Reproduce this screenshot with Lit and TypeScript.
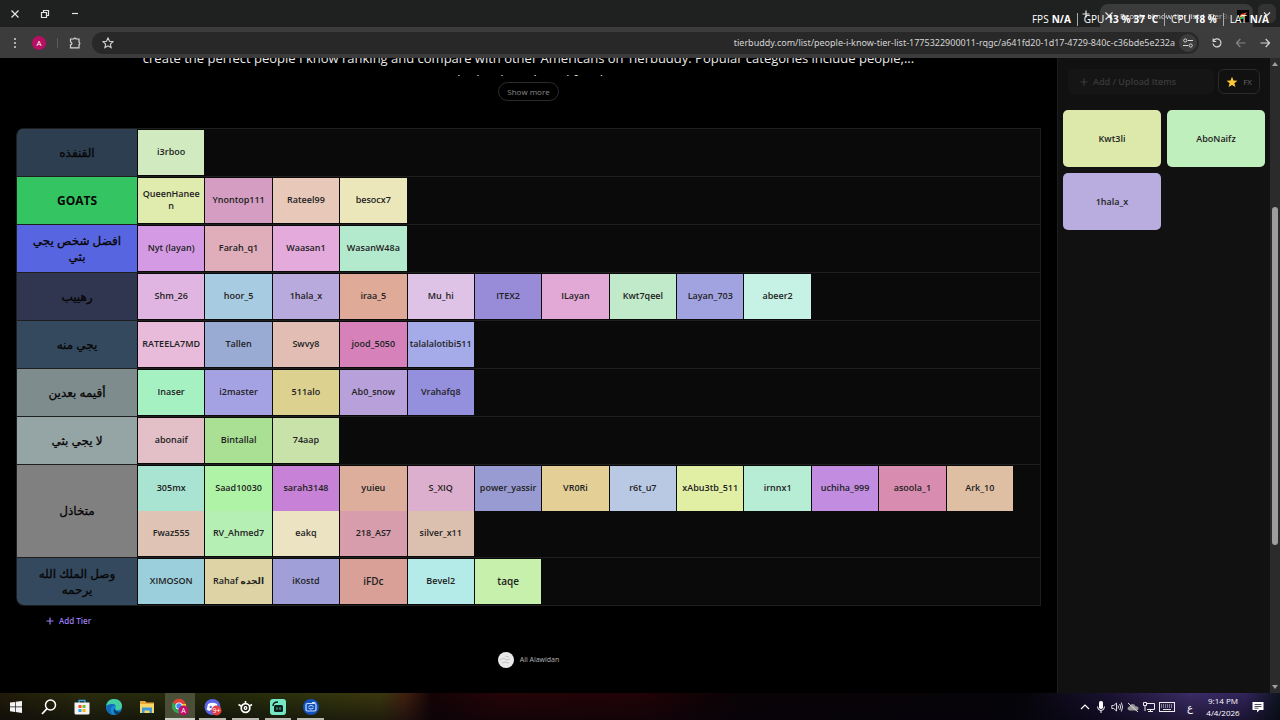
import { LitElement, html, css, svg } from "lit";
import { customElement } from "lit/decorators.js";

interface Tile { name: string; color: string; variant: string }
interface Tier { label: string; color: string; latin?: boolean; tiles: Tile[] }

const t = (name: string, color: string, variant = ""): Tile => ({ name, color, variant });

const tiers: Tier[] = [
  { label: "القنفذه", color: "#2c3e50", tiles: [t("i3rboo", "#d2eac0")] },
  { label: "GOATS", latin: true, color: "#34c461", tiles: [t("QueenHaneen", "#e0ebae"), t("Ynontop111", "#d59dc1"), t("Rateel99", "#e7c8b9"), t("besocx7", "#ece7bb")] },
  { label: "افضل شخص يجي بثي", color: "#5865e0", tiles: [t("Nyt (layan)", "#d49ae4"), t("Farah_q1", "#e0adba"), t("Waasan1", "#e4aadb"), t("WasanW48a", "#b3e9cd")] },
  { label: "رهييب", color: "#303650", tiles: [t("Shm_26", "#e1b5e1"), t("hoor_5", "#a7cbe1"), t("1hala_x", "#b8aadd"), t("iraa_5", "#dfaa98"), t("Mu_hi", "#dfc3e7"), t("ITEX2", "#988cd9"), t("ILayan", "#e3a9d6"), t("Kwt7qeel", "#c1eaca"), t("Layan_703", "#a1a2e0"), t("abeer2", "#c5f2e4")] },
  { label: "يجي منه", color: "#34495e", tiles: [t("RATEELA7MD", "#e7bbd9"), t("Tallen", "#99abd3"), t("Swvy8", "#e1bdb3"), t("jood_5050", "#d681ba"), t("talalalotibi511", "#a5aae8", "snug")] },
  { label: "أقيمه بعدين", color: "#7f8c8d", tiles: [t("Inaser", "#a6f1c2"), t("i2master", "#a5a2e4"), t("511alo", "#ddd18f"), t("Ab0_snow", "#b8a0db"), t("Vrahafq8", "#9490de")] },
  { label: "لا يجي بثي", color: "#95a5a6", tiles: [t("abonaif", "#e3bfc7"), t("Bintallal", "#a9e093"), t("74aap", "#c9e2aa")] },
  { label: "متخاذل", color: "#808080", tiles: [t("305mx", "#a9e3d1"), t("Saad10030", "#aff3a6"), t("sarah3148", "#c782d7"), t("yuieu", "#dcae9b"), t("S_XIQ", "#dcafce"), t("power_yassir", "#979bd1"), t("VR0Ri", "#e4cf97"), t("r6t_u7", "#b9c9e4"), t("xAbu3tb_511", "#e1efa5"), t("irnnx1", "#b8edd5"), t("uchiha_999", "#c28de0"), t("asoola_1", "#d88cb0"), t("Ark_10", "#dfbfa3"), t("Fwaz555", "#dfc3b5"), t("RV_Ahmed7", "#b6efb4"), t("eakq", "#ebe3c2"), t("218_AS7", "#d89dac"), t("silver_x11", "#dcc0af")] },
  { label: "وصل الملك الله يرحمه", color: "#34495e", tiles: [t("XIMOSON", "#9bcfdb"), t("Rahaf الجده", "#ddd3a4"), t("iKostd", "#a09fd8"), t("iFDc", "#d8a097", "large"), t("Bevel2", "#b4ebe8"), t("taqe", "#c6f0ab", "large")] },
];

const pool: Tile[] = [t("Kwt3li", "#dce9aa"), t("AboNaifz", "#c0efbe"), t("1hala_x", "#b9acde")];

const line = (d: string) => svg`<path d=${d} fill="none" stroke="currentColor" stroke-width="1.2"/>`;

const icons = {
  close: svg`<svg class="i10" viewBox="0 0 10 10">${line("M1.5 1.5l7 7M8.500 1.500l-7 7")}</svg>`,
  restore: svg`<svg class="i10" viewBox="0 0 10 10">${line("M1.500 3.500h5v5h-5zM3.500 3V1.500h5v5H7")}</svg>`,
  minimize: svg`<svg class="i10" viewBox="0 0 10 10">${line("M2 4.500h6")}</svg>`,
  plus: svg`<svg class="i10" viewBox="0 0 10 10">${line("M5 1.500v7M1.500 5h7")}</svg>`,
  chevron: svg`<svg class="i10" viewBox="0 0 10 10">${line("M2 3.500l3 3 3-3")}</svg>`,
  up: svg`<svg class="i10" viewBox="0 0 10 10">${line("M1 7l4-4 4 4")}</svg>`,
  dots: svg`<svg class="i12" viewBox="0 0 12 12" fill="#d5d5d5"><circle cx="6" cy="2" r="1"/><circle cx="6" cy="6" r="1"/><circle cx="6" cy="10" r="1"/></svg>`,
  puzzle: svg`<svg class="i12" viewBox="0 0 12 12">${line("M1.500 2h3.300a1.300 1.300 0 0 1 2.400 0H10v3.200a1.300 1.300 0 0 1 0 2.400V10.800H1.500V7.800a1.400 1.400 0 0 0 0-2.800z")}</svg>`,
  star: svg`<svg class="i12" viewBox="0 0 12 12"><path d="M6 1l1.500 3.300 3.500.4-2.600 2.400.7 3.500L6 8.800l-3.100 1.800.7-3.500L1 4.700l3.500-.4z" fill="none" stroke="currentColor" stroke-width="1.100"/></svg>`,
  tune: svg`<svg class="i12" viewBox="0 0 12 12">${line("M5.800 3.500H11M1 8.500h5.200")}<circle cx="3.300" cy="3.500" r="1.600" fill="none" stroke="currentColor"/><circle cx="8.700" cy="8.500" r="1.600" fill="none" stroke="currentColor"/></svg>`,
  reload: svg`<svg class="i12" viewBox="0 0 12 12">${line("M2.300 4.200A4 4 0 1 1 2 6.500M2.200 1.500v3h3")}</svg>`,
  back: svg`<svg class="i12" viewBox="0 0 12 12">${line("M10.500 6h-9M5.300 2L1.500 6l3.800 4")}</svg>`,
  forward: svg`<svg class="i12" viewBox="0 0 12 12">${line("M1.500 6h9M6.700 2l3.800 4-3.800 4")}</svg>`,
  goldStar: svg`<svg class="i12" viewBox="0 0 12 12"><path d="M6 .8l1.500 3.600 3.900.3-3 2.500 1 3.900L6 9l-3.400 2.100 1-3.900-3-2.500 3.900-.3z" fill="#fdc93a"/></svg>`,
  favicon: svg`<svg class="i12" viewBox="0 0 12 12"><rect width="12" height="12" fill="#050505"/><path d="M4 4l6-1.500L8.500 4.500 3 5.500z" fill="#f0473c"/><path d="M3 5.500l5.500-1-1 1.800L3 7.500z" fill="#f5b82e"/><path d="M3 7.500l4-1L5.500 9H3z" fill="#2fbd5b"/></svg>`,
};

const apps = [
  { name: "Start", icon: svg`<svg class="i18" viewBox="0 0 18 18" fill="#f4f4f4"><path d="M3 4.600l5-.7v4.700H3zM8.700 3.800L15 3v5.600H8.700zM3 9.300h5V14l-5-.7zM8.700 9.300H15V15l-6.300-.9z"/></svg>` },
  { name: "Search", icon: svg`<svg class="i18" viewBox="0 0 18 18"><circle cx="10.500" cy="7" r="5" fill="none" stroke="#fff" stroke-width="1.500"/><path d="M7 10.700L2 16" stroke="#fff" stroke-width="1.700"/></svg>` },
  { name: "Store", icon: svg`<svg class="i18" viewBox="0 0 18 18"><path d="M6 5V2.500h6V5" fill="none" stroke="#38a8e8" stroke-width="1.300"/><path d="M1.500 4.500h15V15q0 1.500-1.500 1.500H3Q1.500 16.500 1.500 15z" fill="#f3f3f3"/><path d="M5.500 7h3v3h-3z" fill="#f05123"/><path d="M9.500 7h3v3h-3z" fill="#7eba2d"/><path d="M5.500 11h3v3h-3z" fill="#2fa4e7"/><path d="M9.500 11h3v3h-3z" fill="#fbb70b"/></svg>` },
  { name: "Edge", icon: svg`<svg class="i18" viewBox="0 0 18 18"><circle cx="9" cy="9" r="8" fill="#168cd5"/><path d="M1.200 8C2 3.500 5 1 9 1c5 0 8 3.300 8 7 0 2.700-2 4-4.500 4-2 0-2.700-1-2-2 1-2-.2-4-3-4C4.500 6 2.200 7 1.200 8z" fill="#45cfa0"/><path d="M7.500 6C4.500 6 2 7 1.200 8.300 1 13 4.500 17 9 17c-3-1.500-4-5-2.700-7.500C7 8 8.500 7.500 10.300 8 10 6.700 9 6 7.500 6z" fill="#1469b8"/><path d="M9.500 10c0 3 3 4.500 6.500 3-1 1.500-2.500 3-5 3.500-2.500-1.500-3-4.500-1.500-6.500z" fill="#0c3c6c"/></svg>` },
  { name: "Files", icon: svg`<svg class="i18" viewBox="0 0 18 18"><path d="M2 3h5l1.500 1.500H16V15H2z" fill="#e5a93a"/><path d="M2 6h14v9H2z" fill="#fbd568"/><path d="M4 9.500h10V15h-2.500v-2.500h-5V15H4z" fill="#3c9bdc"/></svg>` },
  { name: "Chrome", state: "active", icon: svg`<svg class="i18" viewBox="0 0 18 18"><circle cx="8" cy="8" r="7.200" fill="#e44333"/><path d="M1.800 4.500A7.200 7.200 0 0 0 8 15.200l3.300-5.500L8 8z" fill="#28a555"/><path d="M15 6A7.200 7.200 0 0 1 8 15.200L11 9V6z" fill="#fbc52c"/><circle cx="8" cy="8" r="3.600" fill="#fff"/><circle cx="8" cy="8" r="2.700" fill="#4387ee"/><circle cx="12.500" cy="12.500" r="5" fill="#c2106a"/><text x="12.500" y="15" text-anchor="middle" font-size="7" fill="#fff">A</text></svg>` },
  { name: "Discord", state: "open", icon: svg`<svg class="i18" viewBox="0 0 18 18"><circle cx="8.500" cy="9" r="8" fill="#5966e8"/><path d="M4 6q4.500-2.500 9 0l1.300 5.500q-1.500 1.700-3 1.500l-.8-1.200H6.500L5.700 13q-1.800-.2-3-1.500z" fill="#fff"/><circle cx="6.700" cy="9" r="1.200" fill="#5966e8"/><circle cx="12.500" cy="12.500" r="5" fill="#e13d43"/><text x="12.500" y="15" text-anchor="middle" font-size="7" fill="#fff">9+</text></svg>` },
  { name: "SteelSeries", state: "open", icon: svg`<svg class="i18" viewBox="0 0 18 18" fill="none" stroke="#fff"><circle cx="9.500" cy="10" r="4.300" stroke-width="1.700"/><circle cx="9.500" cy="10" r="1.300" stroke-width="1.300"/><path d="M9.500 3v2.500M2.500 6.500l3.500 2M16 6.500l-2.500 1.500" stroke-width="1.500"/></svg>` },
  { name: "Streamlabs", state: "open", icon: svg`<svg class="i18" viewBox="0 0 18 18"><rect x="1" y="1" width="16" height="16" rx="3" fill="#74e8c5"/><path d="M4 8q0-4 5-4" fill="none" stroke="#0a211b" stroke-width="1.500"/><rect x="5" y="7" width="9" height="7" rx="1.500" fill="#0a211b"/><path d="M8 9.500v2M11 9.500v2" stroke="#74e8c5"/></svg>` },
  { name: "Camera", state: "open", icon: svg`<svg class="i18" viewBox="0 0 18 18"><circle cx="9" cy="9" r="8" fill="#1251bb"/><rect x="4" y="5.500" width="10" height="7.500" rx="1.500" fill="none" stroke="#c7ddff" stroke-width="1.200"/><path d="M6.500 8.500q2.500-2.200 5 0M11.500 10q-2.500 2.200-5 0M10 4.500h3.500" fill="none" stroke="#c7ddff"/></svg>` },
];

const tray = [
  { name: "Show hidden icons", icon: icons.up },
  { name: "Microphone", icon: svg`<svg class="i12" viewBox="0 0 12 12"><rect x="4" y="0" width="4" height="8" rx="1.800" fill="#fff"/><path d="M2.500 5.500q0 4 3.500 4t3.500-4M6 9.500V12" fill="none" stroke="#fff"/></svg>` },
  { name: "Volume", icon: svg`<svg class="i12" viewBox="0 0 12 12" fill="none" stroke="#eee"><path d="M.8 4.500h2L5.500 2v8L2.800 7.500h-2zM7 4.500q1 1.500 0 3M8.700 3q2 3 0 6M10.300 1.500q2.600 4.500 0 9" stroke-width=".9"/></svg>` },
  { name: "Cloud offline", icon: svg`<svg class="i12" viewBox="0 0 12 12"><path d="M2.500 9.500q-2-.5-2-2t2-2q.5-2.500 3-2.500 2 0 3 2.200 3 0 3 2.300 0 2-2 2z" fill="#999"/><path d="M1 2l10 9" stroke="#ddd"/></svg>` },
  { name: "Network", icon: svg`<svg class="i12" viewBox="0 0 12 12" fill="none" stroke="#eee"><path d="M4 2.500h7.500v6H4M7.500 8.500v2M5 10.500h5M.5 1.500h3v3h-3zM2 4.500v5.500"/></svg>` },
];

@customElement("app-root")
export class AppRoot extends LitElement {
  static styles = css`
    :host { display: flex; flex-direction: column; height: 100vh; overflow: hidden; background: #000; color: #ddd;
      font-family: "Open Sans", "Noto Sans", "DejaVu Sans", sans-serif; font-size: 9px; line-height: 12px; }
    * { box-sizing: border-box; }
    button, input { font: inherit; color: inherit; background: none; border: 0; padding: 0; margin: 0; }
    button { display: flex; align-items: center; justify-content: center; white-space: nowrap; }
    svg { display: block; flex: none; }
    .i10 { width: 10px; height: 10px; }
    .i12 { width: 12px; height: 12px; }
    .i18 { width: 18px; height: 18px; }

    .titlebar { position: relative; display: flex; align-items: center; height: 27px; flex: none; background: #1f2120; color: #e4e4e4; }
    .titlebar button { width: 30px; height: 27px; }
    .spacer { flex: 1; }
    .titlebar .new { width: 28px; }
    .tab { display: flex; align-items: center; gap: 6px; width: 153px; height: 23px; padding: 0 4px; align-self: flex-end; background: #3b3b3b; border-radius: 8px 8px 0 0; }
    .tab button { width: 10px; height: 20px; }
    .tab span { flex: 1; overflow: hidden; white-space: nowrap; font-size: 8px; mask-image: linear-gradient(90deg, #000 85%, transparent); }
    .titlebar .search { width: 18px; height: 19px; margin: 0 4px 0 5px; background: #333; border-radius: 6px; }
    .stats { position: absolute; right: 11px; top: 11px; display: flex; align-items: center; gap: 6px; color: #fff; font-size: 10px; line-height: 16px; white-space: nowrap; }
    .stats span { display: flex; gap: 3px; }
    .stats b { font-weight: 700; }
    .stats i { width: 1px; height: 13px; background: #aaa; }

    .toolbar { display: flex; align-items: center; height: 31px; flex: none; padding: 0 3px; background: #3c3c3c; color: #d5d5d5; }
    .toolbar button { width: 24px; height: 24px; }
    .toolbar .wide { width: 34px; }
    .toolbar .off { color: #858585; }
    .avatar { width: 14px; height: 14px; border-radius: 50%; background: #b90f62; color: #fff; font-size: 8px; line-height: 14px; text-align: center; }
    .sep { width: 1px; height: 10px; background: #5b5b5b; margin-left: 6px; }
    .omnibox { display: flex; align-items: center; flex: 1; height: 22px; padding: 0 2px 0 4px; border-radius: 11px; background: #282828; margin-right: 6px; }
    .omnibox input { flex: 1; min-width: 0; text-align: right; font-family: "Noto Sans", sans-serif; font-size: 9px; height: 20px; outline: 0; }
    .omnibox .tune { width: 18px; height: 18px; border-radius: 50%; background: #3c3c3c; margin-left: 4px; }

    .page { display: flex; flex: 1; min-height: 0; overflow: hidden; }
    main { flex: 1; min-width: 0; padding: 0 16px; display: flex; flex-direction: column; align-items: center; }
    .desc { flex: none; height: 29px; margin: -11px 0 0; overflow: hidden; font-size: 13px; line-height: 22px; color: #e8e8e8; text-align: center; }
    .desc span { display: block; }
    .more { flex: none; height: 19px; margin-top: 6px; padding: 0 8px; border: 1px solid #2b2b2b; border-radius: 10px; color: #8c8c8c; font-size: 8px; }
    .board { flex: none; width: 100%; margin-top: 27px; border: 1px solid #1e1e1e; border-top: 0; border-radius: 8px 0 0 8px; background: #0a0a0a; overflow: hidden; }
    .tier { display: grid; grid-template-columns: 120px 1fr; border-top: 1px solid #1e1e1e; }
    .label { display: flex; align-items: center; justify-content: center; padding: 0 12px; color: #060606; font-size: 12px; line-height: 16px; -webkit-text-stroke: 0.3px #060606; text-align: center; }
    .label.latin { font-weight: 700; -webkit-text-stroke: 0; }
    .tiles { display: grid; grid-template-columns: repeat(13, 1fr); column-gap: 1px; margin: 1px 27px 1px 1px; }
    .tile { display: flex; align-items: center; justify-content: center; min-width: 0; height: 45px; padding: 0 4px 2px; color: #222; font-size: 9px; font-weight: 600; line-height: 12px; text-align: center; }
    .tile span { min-width: 0; max-width: 100%; overflow-wrap: anywhere; }
    .tile.large { font-size: 10px; }
    .tile.snug { padding: 0 0 2px; white-space: nowrap; }
    .addtier { flex: none; align-self: flex-start; gap: 4px; height: 16px; margin: 7px 0 0 29px; color: #9b7df0; font-weight: 600; font-size: 8px; }
    .author { display: flex; align-items: center; gap: 6px; margin-top: 23px; color: #b5b5b5; font-size: 7px; text-decoration: none; }
    .face { width: 16px; height: 16px; }

    aside { width: 213px; flex: none; padding: 11px 5px 0 5px; background: #111; border-left: 1px solid #1d1d1d; }
    .actions { display: flex; gap: 4px; padding: 0 5px; height: 25px; }
    .upload { flex: 1; gap: 4px; justify-content: flex-start; padding-left: 11px; background: #151515; border-radius: 5px; font-weight: 600; }
    .upload:disabled { color: #3a3a3a; }
    .fx { width: 42px; gap: 5px; border: 1px solid #2a2a2a; border-radius: 6px; color: #666; font-size: 8px; }
    .pool { display: grid; grid-template-columns: 1fr 1fr; gap: 6px; margin-top: 16px; }
    .pool .tile { height: 57px; padding-bottom: 0; border-radius: 5px; }
    .scroll { display: flex; flex-direction: column; align-items: center; width: 10px; flex: none; background: #2b2b2b; padding: 4px 0; color: #a0a0a0; }
    .thumb { width: 6px; height: 338px; border-radius: 3px; background: #9d9d9d; margin: 141px 0 auto; }
    .arrow { width: 6px; height: 4px; }

    .taskbar { display: flex; height: 27px; flex: none; align-items: center; color: #fff; font-size: 8px;
      background: linear-gradient(180deg, transparent, rgba(5, 4, 12, 0.5)),
        linear-gradient(90deg, #1f1a08 0, #2a2c0d 90px, #23290b 220px, #32350c 330px, #3a370e 380px, #40200f 405px, #140305 432px, #240407 500px, #200306 640px, #090205 740px, #050408 1020px, #1a1232 1110px, #3b2c66 1190px, #30245a 1245px, #0d1520 1280px); }
    .apps { display: grid; grid-template-columns: repeat(10, 1fr); width: 327px; height: 27px; }
    .apps button { border-bottom: 2px solid transparent; padding-top: 2px; margin: 0 3px; }
    .apps .open { border-bottom-color: #b9b7ae; }
    .apps .active { border-bottom-color: #d0cec8; background: #4c4f38; margin: 0 1px; }
    .tray { display: flex; align-items: center; }
    .tray button { width: 16px; height: 27px; }
    .tray .kb { width: 20px; }
    .tray .lang { width: 26px; font-size: 10px; }
    .tray .clock { width: 40px; flex-direction: column; line-height: 12px; }
    .tray .note { width: 30px; margin-right: 7px; }
  `;

  private tile(item: Tile) {
    return html`<div class="tile ${item.variant}" style="background:${item.color}"><span>${item.name}</span></div>`;
  }

  render() {
    return html`
      <header class="titlebar">
        <button aria-label="Close">${icons.close}</button>
        <button aria-label="Restore">${icons.restore}</button>
        <button aria-label="Minimize">${icons.minimize}</button>
        <div class="spacer"></div>
        <button class="new" aria-label="New tab">${icons.plus}</button>
        <div class="tab">
          <button aria-label="Close tab">${icons.close}</button>
          <span>People I know tier list | TierBuddy</span>
          ${icons.favicon}
        </div>
        <button class="search" aria-label="Search tabs">${icons.chevron}</button>
        <div class="stats">
          <span>FPS <b>N/A</b></span><i></i><span>GPU <b>13 %</b> <b>37 °C</b></span><i></i><span>CPU <b>18 %</b></span><i></i><span>LAT <b>N/A</b></span>
        </div>
      </header>
      <nav class="toolbar" aria-label="Browser">
        <button aria-label="Menu">${icons.dots}</button>
        <button aria-label="Profile"><span class="avatar">A</span></button>
        <div class="sep"></div>
        <button class="wide" aria-label="Extensions">${icons.puzzle}</button>
        <div class="omnibox">
          <button aria-label="Bookmark">${icons.star}</button>
          <input aria-label="Address" value="tierbuddy.com/list/people-i-know-tier-list-1775322900011-rqgc/a641fd20-1d17-4729-840c-c36bde5e232a" />
          <button class="tune" aria-label="Site settings">${icons.tune}</button>
        </div>
        <button aria-label="Reload">${icons.reload}</button>
        <button class="off" aria-label="Back">${icons.back}</button>
        <button aria-label="Forward">${icons.forward}</button>
      </nav>
      <div class="page">
        <main>
          <p class="desc">
            <span>create the perfect people I know ranking and compare with other Americans on Tierbuddy. Popular categories include people,...</span>
            <span>and other brands and families</span>
          </p>
          <button class="more">Show more</button>
          <section class="board" aria-label="Tier list">
            ${tiers.map((tier) => html`
              <div class="tier">
                <div class="label ${tier.latin ? "latin" : ""}" dir="auto" style="background:${tier.color}">${tier.label}</div>
                <div class="tiles">${tier.tiles.map((item) => this.tile(item))}</div>
              </div>`)}
          </section>
          <button class="addtier">${icons.plus} Add Tier</button>
          <a class="author" href="#">
            <svg class="face" viewBox="0 0 16 16"><circle cx="8" cy="8" r="8" fill="#e9e9e9"/><path d="M2 8l4-2 2 2 4-1M4 11l3-1 4 1M7 4l4 1" fill="none" stroke="#b8b8b8" stroke-width=".8"/></svg>
            Ali Alawidan
          </a>
        </main>
        <aside>
          <div class="actions">
            <button class="upload" disabled>${icons.plus} Add / Upload Items</button>
            <button class="fx">${icons.goldStar} FX</button>
          </div>
          <div class="pool">${pool.map((item) => this.tile(item))}</div>
        </aside>
        <div class="scroll">
          <svg class="arrow" viewBox="0 0 6 4"><path d="M0 4l3-4 3 4z" fill="currentColor"/></svg>
          <div class="thumb"></div>
          <svg class="arrow" viewBox="0 0 6 4"><path d="M0 0l3 4 3-4z" fill="currentColor"/></svg>
        </div>
      </div>
      <footer class="taskbar">
        <div class="apps">${apps.map((app) => html`<button class=${app.state ?? ""} aria-label=${app.name}>${app.icon}</button>`)}</div>
        <div class="spacer"></div>
        <div class="tray">
          ${tray.map((item) => html`<button aria-label=${item.name}>${item.icon}</button>`)}
          <button class="kb" aria-label="Touch keyboard"><svg width="16" height="10" viewBox="0 0 16 10"><rect x=".5" y=".5" width="15" height="9" fill="none" stroke="#eee"/><path d="M2 3h12M2 5h12" stroke="#ddd" stroke-dasharray="1 1"/><path d="M4 7.500h8" stroke="#ddd"/></svg></button>
          <button class="lang" aria-label="Language">ع</button>
          <button class="clock"><span>9:14 PM</span><span>4/4/2026</span></button>
          <button class="note" aria-label="Notifications"><svg class="i12" viewBox="0 0 12 12"><path d="M.5 1h11v8H7.500L5 11.500V9H.5z" fill="#fff"/><path d="M2.500 3.500h7M2.500 5.500h7M2.500 7.200h4" stroke="#29243f" stroke-width=".8"/></svg></button>
        </div>
      </footer>
    `;
  }
}
